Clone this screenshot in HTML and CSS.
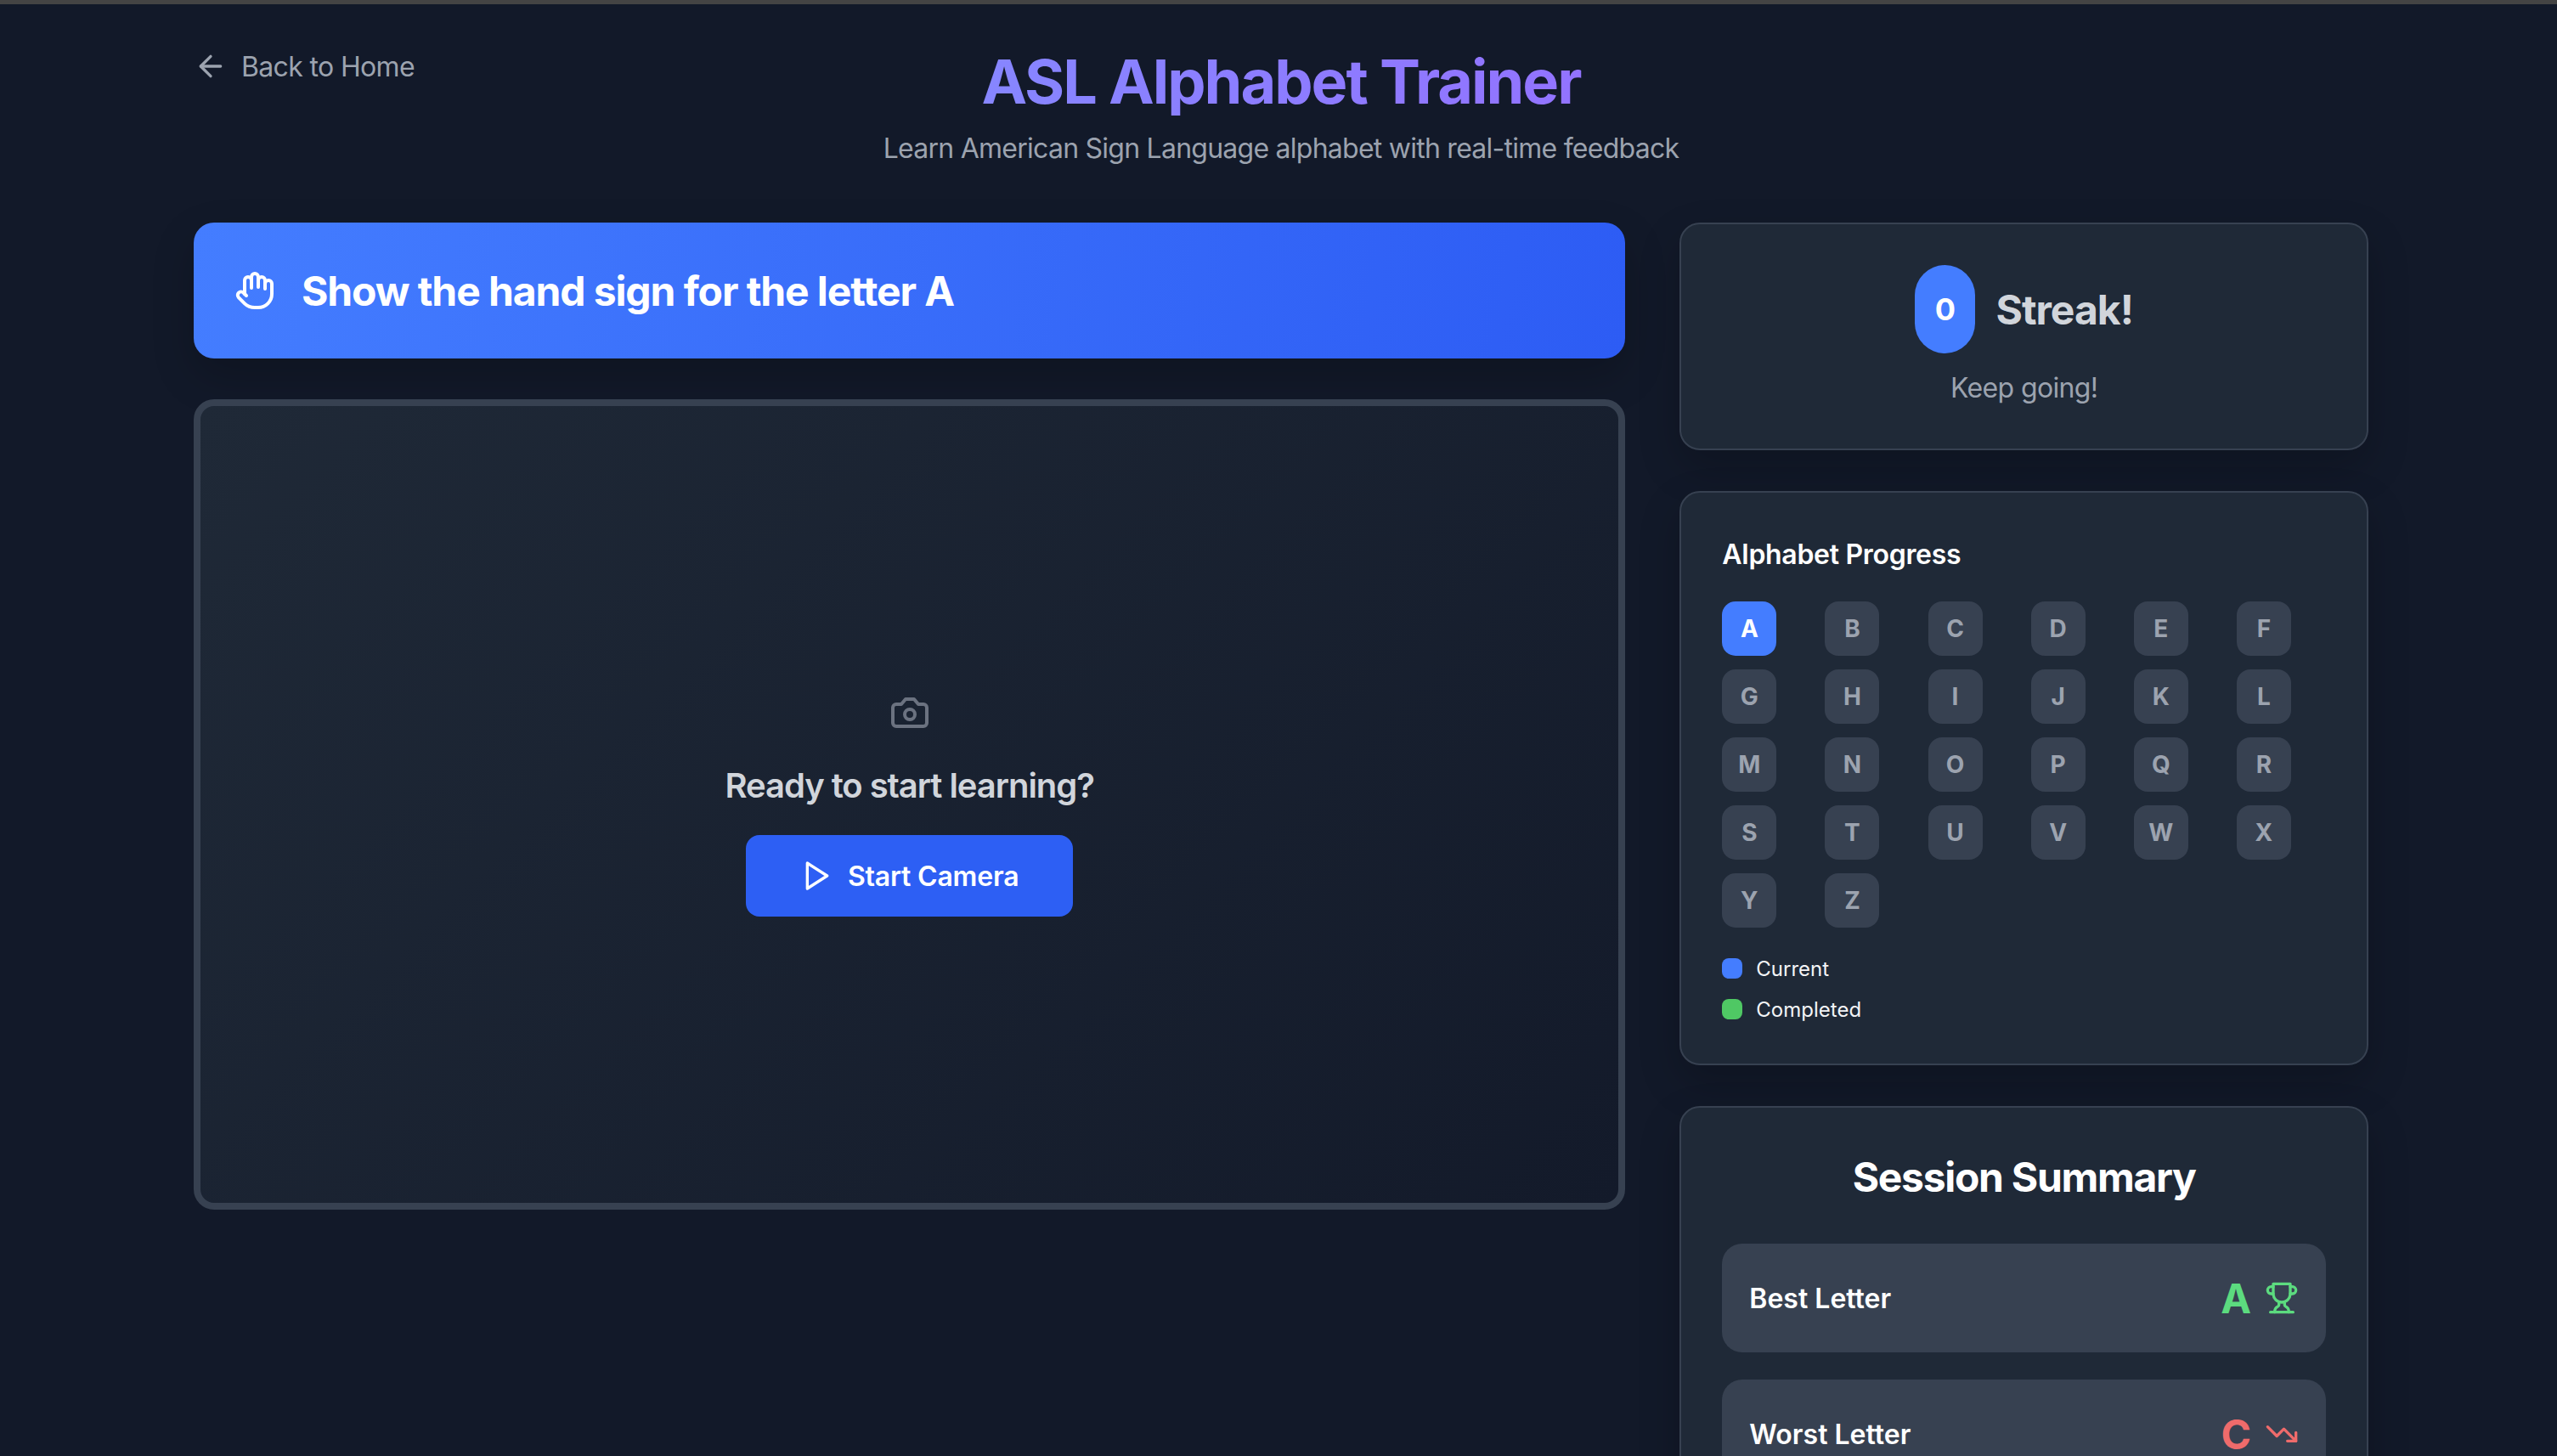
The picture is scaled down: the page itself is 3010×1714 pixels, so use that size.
FILE: index.html
```html
<!DOCTYPE html>
<html lang="en">
<head>
  <meta charset="UTF-8" />
  <title>ASL Alphabet Trainer</title>
  <link rel="stylesheet" href="styles.css">
</head>
<body>
  <div class="topbar"></div>
  <div class="page">
    <header class="header">
      <a class="back-link" href="#">
        <svg class="icon-back" viewBox="0 0 24 24"><path d="m12 19-7-7 7-7"/><path d="M19 12H5"/></svg>
        <span>Back to Home</span>
      </a>
      <div class="heading">
        <h1>ASL Alphabet Trainer</h1>
        <p>Learn American Sign Language alphabet with real-time feedback</p>
      </div>
    </header>

    <div class="layout">
      <main class="main-col">
        <div class="prompt">
          <svg class="icon-hand" viewBox="0 0 24 24">
            <path d="M18 11V6a2 2 0 0 0-2-2a2 2 0 0 0-2 2"/>
            <path d="M14 10V4a2 2 0 0 0-2-2a2 2 0 0 0-2 2v2"/>
            <path d="M10 10.5V6a2 2 0 0 0-2-2a2 2 0 0 0-2 2v8"/>
            <path d="M18 8a2 2 0 1 1 4 0v6a8 8 0 0 1-8 8h-2c-2.8 0-4.5-.86-5.99-2.34l-3.6-3.6a2 2 0 0 1 2.83-2.82L7 15"/>
          </svg>
          <h2>Show the hand sign for the letter A</h2>
        </div>

        <div class="camera">
          <svg class="icon-camera" viewBox="0 0 24 24">
            <path d="M14.5 4h-5L7 7H4a2 2 0 0 0-2 2v9a2 2 0 0 0 2 2h16a2 2 0 0 0 2-2V9a2 2 0 0 0-2-2h-3l-2.5-3z"/>
            <circle cx="12" cy="13" r="3"/>
          </svg>
          <h3>Ready to start learning?</h3>
          <button class="start-btn">
            <svg class="icon-play" viewBox="0 0 24 24"><polygon points="5 3 19 12 5 21 5 3"/></svg>
            <span>Start Camera</span>
          </button>
        </div>
      </main>

      <aside class="side-col">
        <section class="card streak">
          <div class="streak-top">
            <div class="streak-count">0</div>
            <div class="streak-label">Streak!</div>
          </div>
          <p class="streak-note">Keep going!</p>
        </section>

        <section class="card">
          <h3 class="card-title">Alphabet Progress</h3>
          <div class="letters">
            <div class="letter current">A</div>
            <div class="letter">B</div>
            <div class="letter">C</div>
            <div class="letter">D</div>
            <div class="letter">E</div>
            <div class="letter">F</div>
            <div class="letter">G</div>
            <div class="letter">H</div>
            <div class="letter">I</div>
            <div class="letter">J</div>
            <div class="letter">K</div>
            <div class="letter">L</div>
            <div class="letter">M</div>
            <div class="letter">N</div>
            <div class="letter">O</div>
            <div class="letter">P</div>
            <div class="letter">Q</div>
            <div class="letter">R</div>
            <div class="letter">S</div>
            <div class="letter">T</div>
            <div class="letter">U</div>
            <div class="letter">V</div>
            <div class="letter">W</div>
            <div class="letter">X</div>
            <div class="letter">Y</div>
            <div class="letter">Z</div>
          </div>
          <div class="legend">
            <div class="legend-row"><span class="swatch swatch-blue"></span>Current</div>
            <div class="legend-row"><span class="swatch swatch-green"></span>Completed</div>
          </div>
        </section>

        <section class="card">
          <h2 class="summary-title">Session Summary</h2>
          <div class="summary-rows">
            <div class="summary-row">
              <span>Best Letter</span>
              <div class="summary-value best">
                <strong>A</strong>
                <svg class="icon-small" viewBox="0 0 24 24">
                  <path d="M6 9H4.5a2.5 2.5 0 0 1 0-5H6"/>
                  <path d="M18 9h1.5a2.5 2.5 0 0 0 0-5H18"/>
                  <path d="M4 22h16"/>
                  <path d="M10 14.66V17c0 .55-.47.98-.97 1.21C7.85 18.75 7 20.24 7 22"/>
                  <path d="M14 14.66V17c0 .55.47.98.97 1.21C16.15 18.75 17 20.24 17 22"/>
                  <path d="M18 2H6v7a6 6 0 0 0 12 0V2Z"/>
                </svg>
              </div>
            </div>
            <div class="summary-row">
              <span>Worst Letter</span>
              <div class="summary-value worst">
                <strong>C</strong>
                <svg class="icon-small" viewBox="0 0 24 24">
                  <polyline points="22 17 13.5 8.5 8.5 13.5 2 7"/>
                  <polyline points="16 17 22 17 22 11"/>
                </svg>
              </div>
            </div>
          </div>
        </section>
      </aside>
    </div>
  </div>
</body>
</html>
```

FILE: styles.css
```css
* {
  box-sizing: border-box;
}

html,
body {
  height: 100%;
  overflow: hidden;
}

body {
  margin: 0;
  font-family: Inter, "Liberation Sans", sans-serif;
  background-color: #121929;
  color: #ffffff;
  -webkit-font-smoothing: antialiased;
}

h1,
h2,
h3,
p {
  margin: 0;
}

svg {
  fill: none;
  stroke: currentColor;
  stroke-width: 2;
  stroke-linecap: round;
  stroke-linejoin: round;
  flex-shrink: 0;
}

.topbar {
  height: 5px;
  background: #444444;
}

.page {
  width: 2560px;
  margin-left: 228px;
}

/* header */
.header {
  display: grid;
  grid-template-columns: 1fr auto 1fr;
  padding-top: 51px;
}

.back-link {
  display: flex;
  align-items: center;
  gap: 16px;
  align-self: start;
  justify-self: start;
  height: 48px;
  margin-top: -2px;
  font-size: 32px;
  letter-spacing: -0.65px;
  color: #9ca3af;
  text-decoration: none;
}

.icon-back {
  width: 40px;
  height: 40px;
}

.heading {
  grid-column: 2;
  text-align: center;
}

.heading h1 {
  font-size: 72px;
  line-height: 80px;
  font-weight: 700;
  letter-spacing: -2px;
  background: linear-gradient(to right, #8589ff, #9470ff);
  -webkit-background-clip: text;
  background-clip: text;
  color: transparent;
}

.heading p {
  margin-top: 11px;
  font-size: 32px;
  line-height: 56px;
  letter-spacing: -0.75px;
  color: #9ca3af;
}

/* two columns */
.layout {
  display: grid;
  grid-template-columns: repeat(3, 1fr);
  gap: 64px;
  margin-top: 59px;
  align-items: start;
}

.main-col {
  grid-column: span 2;
  display: flex;
  flex-direction: column;
  gap: 48px;
}

.side-col {
  display: flex;
  flex-direction: column;
  gap: 48px;
}

.prompt {
  display: flex;
  align-items: center;
  gap: 31px;
  height: 160px;
  padding: 0 48px;
  border-radius: 24px;
  background: linear-gradient(100deg, #447dff, #2d5cf4);
  box-shadow: 0 20px 50px rgba(0, 0, 0, 0.2);
}

.icon-hand {
  width: 48px;
  height: 48px;
}

.prompt h2 {
  font-size: 48px;
  font-weight: 700;
  letter-spacing: -1.1px;
}

.camera {
  display: flex;
  flex-direction: column;
  align-items: center;
  justify-content: center;
  height: 954px;
  border: 8px solid #374151;
  border-radius: 24px;
  background: linear-gradient(135deg, #1f2937, #131a2a);
}

.icon-camera {
  width: 48px;
  height: 48px;
  color: #6b7280;
}

.camera h3 {
  margin-top: 34px;
  font-size: 40px;
  line-height: 56px;
  font-weight: 600;
  letter-spacing: -1.05px;
  color: #d1d5db;
}

.start-btn {
  display: flex;
  align-items: center;
  gap: 16px;
  height: 96px;
  margin-top: 30px;
  padding: 0 64px;
  border: none;
  border-radius: 16px;
  background: #2d5ff4;
  color: #ffffff;
  font-family: inherit;
  font-size: 32px;
  font-weight: 600;
  letter-spacing: -0.2px;
}

.icon-play {
  width: 40px;
  height: 40px;
}

/* side cards */
.card {
  padding: 48px;
  border: 2px solid #374151;
  border-radius: 24px;
  background: #1f2937;
  box-shadow: 0 20px 50px rgba(0, 0, 0, 0.2);
}

.streak {
  text-align: center;
}

.streak-top {
  display: flex;
  align-items: center;
  justify-content: center;
  gap: 24px;
}

.streak-count {
  display: flex;
  align-items: center;
  justify-content: center;
  width: 71px;
  height: 104px;
  border-radius: 36px;
  background: #447dff;
  font-size: 36px;
  font-weight: 700;
  font-variant-numeric: lining-nums;
}

.streak-label {
  font-size: 48px;
  font-weight: 700;
  letter-spacing: -1px;
  color: #d1d5db;
}

.streak-note {
  margin-top: 19px;
  margin-bottom: 2px;
  font-size: 32px;
  line-height: 43px;
  letter-spacing: -0.65px;
  color: #9ca3af;
}

.card-title {
  padding-top: 1px;
  font-size: 32px;
  line-height: 48px;
  font-weight: 600;
  letter-spacing: -0.3px;
}

.letters {
  display: grid;
  grid-template-columns: repeat(6, 1fr);
  gap: 16px;
  margin-top: 31px;
}

.letter {
  display: flex;
  align-items: center;
  justify-content: center;
  width: 64px;
  height: 64px;
  border-radius: 16px;
  background: #374151;
  color: #9ca3af;
  font-size: 28px;
  font-weight: 700;
}

.letter.current {
  background: #447dff;
  color: #ffffff;
}

.legend {
  display: flex;
  flex-direction: column;
  gap: 16px;
  margin-top: 32px;
}

.legend-row {
  display: flex;
  align-items: center;
  gap: 16px;
  height: 32px;
  font-size: 24px;
  color: #f3f4f6;
}

.swatch {
  width: 24px;
  height: 24px;
  border-radius: 8px;
}

.swatch-blue {
  background: #447dff;
}

.swatch-green {
  background: #4fc864;
}

.summary-title {
  padding-top: 2px;
  margin-bottom: -2px;
  font-size: 48px;
  line-height: 64px;
  font-weight: 700;
  letter-spacing: -1.3px;
  text-align: center;
}

.summary-rows {
  display: flex;
  flex-direction: column;
  gap: 32px;
  margin-top: 48px;
}

.summary-row {
  display: flex;
  align-items: center;
  justify-content: space-between;
  height: 128px;
  padding: 0 32px;
  border-radius: 24px;
  background: #374151;
  font-size: 32px;
  font-weight: 600;
}

.summary-value {
  display: flex;
  align-items: center;
  gap: 16px;
}

.summary-value strong {
  font-size: 48px;
  font-weight: 700;
}

.icon-small {
  width: 40px;
  height: 40px;
}

.best {
  color: #5cdb7f;
}

.worst {
  color: #ef6b6b;
}
```
